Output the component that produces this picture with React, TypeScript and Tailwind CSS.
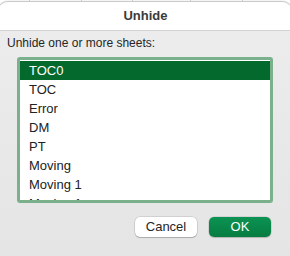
import React, { useState } from 'react';

const sheets = ['TOC0', 'TOC', 'Error', 'DM', 'PT', 'Moving', 'Moving 1', 'Moving 1'];

const font = { fontFamily: '"Liberation Sans", Arial, Helvetica, sans-serif' };

export default function App() {
 const [selected, setSelected] = useState(0);

 return (
  <div className="relative h-[256px] w-[290px] overflow-hidden bg-white" style={font}>
   {/* sheet grid peeking above the dialog */}
   <div className="flex h-[3px]">
    <div className="w-[30px] border-r border-[#d4d4d4]" />
    <div className="w-[52px] border-r border-[#d4d4d4]" />
    <div className="w-[51px] border-r border-[#d4d4d4]" />
    <div className="w-[58px] border-r border-[#d4d4d4]" />
    <div className="w-[52px] border-r border-[#d4d4d4]" />
   </div>

   <div className="absolute left-[-3px] right-[-3px] top-[1px] h-[265px] overflow-hidden rounded-[11px] border border-[#c9c9c9] bg-[#ebebeb] shadow-[0_0_2px_rgba(0,0,0,0.15)]">
    <div className="flex h-[29px] items-center justify-center border-b border-[#d3d3d3] bg-white pl-[1px] text-[13px] font-bold text-[#3a3a3a]">
     Unhide
    </div>

    <div className="bg-gradient-to-b from-[#ececec] to-[#e4e4e4] pl-[9px] pr-[19px] pt-[5px]">
     <div className="text-[12px] leading-[15px] text-[#262626]">Unhide one or more sheets:</div>

     <div className="mt-[6px] ml-[10px] h-[146px] overflow-hidden rounded-[3px] border-[3px] border-[#7bb08c] bg-white">
      <ul className="pt-[1px]">
       {sheets.map((name, i) => (
        <li
         key={i}
         onClick={() => setSelected(i)}
         className={
          i === selected
           ? 'flex h-[19px] items-center bg-[#04692d] pl-[9px] text-[13px] text-white'
           : 'flex h-[19px] items-center pl-[9px] text-[13px] text-[#222]'
         }
        >
         {name}
        </li>
       ))}
      </ul>
     </div>

     <div className="mt-[14px] flex justify-end gap-[12px] pb-[40px] pr-[2px]">
      <button
       type="button"
       className="h-[20px] w-[62px] rounded-[5px] bg-white text-[13px] text-[#262626] shadow-[0_0_0_0.5px_rgba(0,0,0,0.18),0_1px_1px_rgba(0,0,0,0.18)]"
      >
       Cancel
      </button>
      <button
       type="button"
       className="h-[20px] w-[62px] rounded-[5px] bg-gradient-to-b from-[#0c9353] to-[#067c41] text-[13px] text-white shadow-[0_0_0_0.5px_rgba(0,0,0,0.15),0_1px_1px_rgba(0,0,0,0.15)]"
      >
       OK
      </button>
     </div>
    </div>
   </div>
  </div>
 );
}
